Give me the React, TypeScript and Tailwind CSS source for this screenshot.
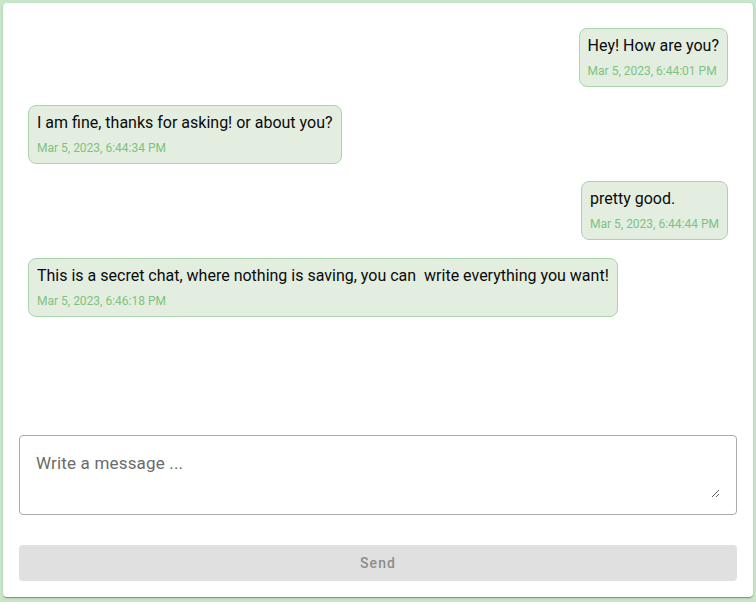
import React from "react";

type Msg = { text: string; time: string; mine: boolean };

const messages: Msg[] = [
  { text: "Hey! How are you?", time: "Mar 5, 2023, 6:44:01 PM", mine: true },
  { text: "I am fine, thanks for asking! or about you?", time: "Mar 5, 2023, 6:44:34 PM", mine: false },
  { text: "pretty good.", time: "Mar 5, 2023, 6:44:44 PM", mine: true },
  {
    text: "This is a secret chat, where nothing is saving, you can  write everything you want!",
    time: "Mar 5, 2023, 6:46:18 PM",
    mine: false,
  },
];

export default function App() {
  return (
    <div
      className="min-h-[602px] w-full bg-[#c8e6c9] p-[3px]"
      style={{ fontFamily: "Roboto, 'Liberation Sans', Arial, sans-serif" }}
    >
      <div className="flex h-[594px] w-[750px] flex-col rounded-[4px] bg-white p-4 shadow-[0_2px_1px_-1px_rgba(0,0,0,0.2),0_1px_1px_0_rgba(0,0,0,0.14),0_1px_3px_0_rgba(0,0,0,0.12)]">
        <div className="flex flex-1 flex-col gap-[17.5px] px-[9px] pt-[9px]">
          {messages.map((m, i) => (
            <div key={i} className={m.mine ? "flex justify-end" : "flex justify-start"}>
              <div className="rounded-[8px] border border-[#a9d5aa] bg-[#e3eee0] px-2 pt-[5px] pb-[6px]">
                <div className="whitespace-pre-wrap text-[16px] leading-[24px] text-[#0a0a0a]">{m.text}</div>
                <div className="mt-[4px] text-[12px] leading-[18px] text-[#7ec281]">{m.time}</div>
              </div>
            </div>
          ))}
        </div>
        <div className="h-[80px] rounded-[4px] border border-[#ababab] px-4 pt-[15px] pb-[16px]">
          <textarea
            className="block h-full w-full resize-y text-[17px] leading-[24px] tracking-[0.01em] text-[#222] outline-none placeholder:text-[#6b6b6b]"
            placeholder="Write a message ..."
          />
        </div>
        <button
          disabled
          className="mt-[30px] h-9 w-full rounded-[4px] bg-[#e0e0e0] text-[14px] font-medium tracking-[0.08em] text-[#8c8c8c]"
        >
          Send
        </button>
      </div>
    </div>
  );
}
